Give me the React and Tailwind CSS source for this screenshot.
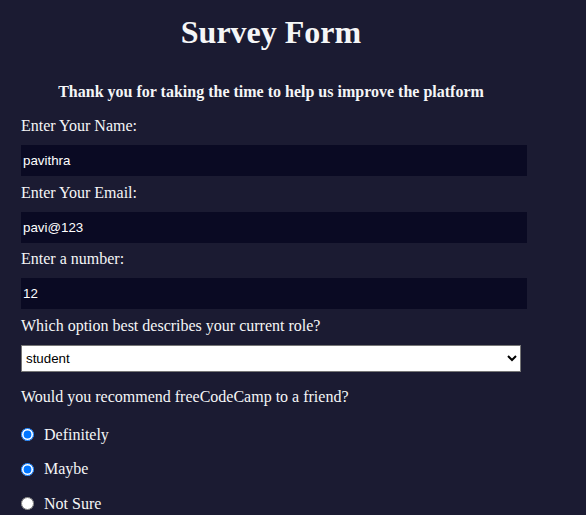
import React from 'react';

const fields = [
  { label: 'Enter Your Name:', type: 'text', value: 'pavithra' },
  { label: 'Enter Your Email:', type: 'email', value: 'pavi@123' },
  { label: 'Enter a number:', type: 'number', value: '12' },
];

const options = [
  { label: 'Definitely', checked: true },
  { label: 'Maybe', checked: true },
  { label: 'Not Sure', checked: false },
];

const App = () => {
  return (
    <div className="min-h-[515px] bg-[#1b1b32] text-[#f5f6f7] font-['Liberation_Serif',serif] pl-[21px] overflow-hidden">
      <div className="w-[500px]">
        <h1 className="pt-[14px] text-center text-[32px] leading-[37px] font-bold">Survey Form</h1>
        <h3 className="mt-[32px] text-center text-[16px] leading-[18px] font-bold">
          Thank you for taking the time to help us improve the platform
        </h3>

        <form className="mt-[16px]">
          {fields.map((f, i) => (
            <div key={f.label} className={i === 0 ? '' : 'mt-[7.5px]'}>
              <label className="block text-[16px] leading-[18px]">{f.label}</label>
              <input
                type="text"
                defaultValue={f.value}
                className="mt-[10px] block w-[506px] h-[31px] px-[2px] bg-[#0a0a23] text-white text-[13.33px] font-['Liberation_Sans',Arial,sans-serif] outline-none"
              />
            </div>
          ))}

          <div className="mt-[7.5px]">
            <label className="block text-[16px] leading-[18px]">Which option best describes your current role?</label>
            <select
              defaultValue="student"
              className="mt-[10px] block w-[500px] h-[27px] bg-white text-black border border-[#767676] text-[13.33px] font-['Liberation_Sans',Arial,sans-serif]"
            >
              <option value="student">student</option>
              <option value="fulltime">Full Time Job</option>
              <option value="learner">Full Time Learner</option>
            </select>
          </div>

          <p className="mt-[16px] text-[16px] leading-[18px]">Would you recommend freeCodeCamp to a friend?</p>

          <div className="mt-[20px] flex flex-col gap-[16.5px]">
            {options.map((o) => (
              <label key={o.label} className="flex items-center gap-[10px] text-[16px] leading-[18px]">
                <input type="radio" name={o.label} defaultChecked={o.checked} className="w-[13px] h-[13px]" />
                {o.label}
              </label>
            ))}
          </div>
        </form>
      </div>
    </div>
  );
};

export default App;
